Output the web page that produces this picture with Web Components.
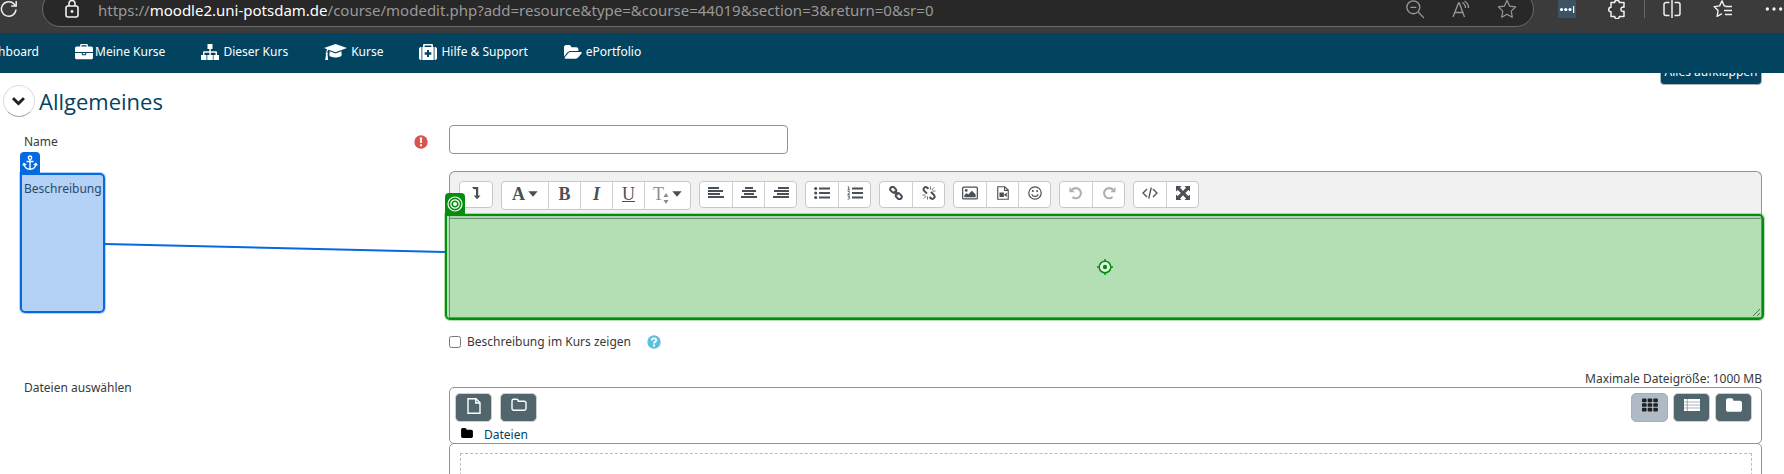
<!DOCTYPE html>
<html lang="de">
<head>
<meta charset="utf-8">
<title>Datei hinzufügen</title>
<style>
  html, body { margin: 0; height: 100%; }
  body { font: 13px/20px "Noto Sans", "Open Sans", sans-serif; color: #373a3c; background: #fff; overflow: hidden; }
</style>
</head>
<body>
<moodle-page></moodle-page>
<script>
const ICONS = {
  reload: ['0 0 18 18', '<g fill="none" stroke="currentColor" stroke-width="1.5"><path d="M16 9.500A7.300 7.300 0 1 1 14 3.900L16 6"/><path d="M16.200 1v5h-5"/></g>'],
  lock: ['0 0 16 20', '<g fill="none" stroke="currentColor" stroke-width="1.6"><rect x="2" y="7" width="12" height="11" rx="2"/><path d="M5 7V4.500a3 3 0 0 1 6 0V7"/></g><circle cx="8" cy="12.500" r="1.400" fill="currentColor"/>'],
  zoomout: ['0 0 18 18', '<g fill="none" stroke="currentColor" stroke-width="1.200"><circle cx="7.500" cy="7.500" r="5.800"/><path d="M12 12l5 5M4.800 7.500h5.400"/></g>'],
  read: ['0 0 20 18', '<g fill="none" stroke="currentColor" stroke-width="1.300"><path d="M2 17L7.500 3h.8L13.500 17M4 12.500h7.800M11 2.500a6 6 0 0 1 3.500 5.500M13.500 1a8 8 0 0 1 4 7"/></g>'],
  star: ['0 0 20 20', '<path fill="none" stroke="currentColor" stroke-width="1.200" stroke-linejoin="round" d="M10 1.500l2.600 5.600 6 .8-4.400 4.200 1.100 6.100L10 15.200l-5.300 3 1.100-6.100L1.400 7.900l6-.8z"/>'],
  dots3: ['0 0 18 18', '<rect width="18" height="18" rx="1" fill="#3b5365"/><g fill="#fff"><circle cx="3.500" cy="9.500" r="1.600"/><circle cx="7.800" cy="9.500" r="1.600"/><circle cx="12" cy="9.500" r="1.600"/><path d="M15 6h1.200v7H15z"/></g>'],
  puzzle: ['0 0 20 20', '<path fill="none" stroke="currentColor" stroke-width="1.500" stroke-linejoin="round" d="M4 3.500h3.700a2.300 2.300 0 0 1 4.600 0H17v4.700a2.200 2.200 0 1 0 0 4V17.500h-4.700a2.300 2.300 0 0 1-4.600 0H4v-4.700a2.300 2.300 0 0 1 0-4.600z"/>'],
  split: ['0 0 20 20', '<path fill="none" stroke="currentColor" stroke-width="1.500" d="M7.500 3.500H4a2 2 0 0 0-2 2v9a2 2 0 0 0 2 2h3.500M12.500 3.500H16a2 2 0 0 1 2 2v9a2 2 0 0 1-2 2h-3.500M10 1v18"/>'],
  favs: ['0 0 20 20', '<path fill="none" stroke="currentColor" stroke-width="1.400" stroke-linejoin="round" d="M13 7.200l-1.800-.3L9 1.800 6.600 6.900l-5.500.7 4 3.900-1 5.900L9 14.700M12.500 7.500H19M11 11.500h8M12 15.500h7"/>'],
  more: ['0 0 18 18', '<g fill="currentColor"><circle cx="3" cy="9" r="1.500"/><circle cx="9" cy="9" r="1.500"/><circle cx="15" cy="9" r="1.500"/></g>'],
  briefcase: ['0 0 1792 1600', '<path d="M640 256h512v-128h-512v128zm1152 640v480q0 66-47 113t-113 47h-1472q-66 0-113-47t-47-113v-480h672v160q0 26 19 45t45 19h320q26 0 45-19t19-45v-160h672zm-768 0v128h-256v-128h256zm768-480v384h-1792v-384q0-66 47-113t113-47h352v-160q0-40 28-68t68-28h576q40 0 68 28t28 68v160h352q66 0 113 47t47 113z"/>'],
  sitemap: ['0 0 18 16', '<path d="M6.500 0h5v5H9.800v2.200H15a1 1 0 0 1 1 1V11h2v5h-5.500v-5h2V8.700H9.800V11h2v5H6.300v-5h2V8.700H3.500V11h2v5H0v-5h2V8.200a1 1 0 0 1 1-1h5.300V5H6.500z"/>'],
  cap: ['0 0 23 18', '<path d="M11.500 1L23 5l-11.500 4.200L4.500 6.700C3.600 7.500 3.300 8.500 3.300 9.800c.6.400.7 1.200.2 1.700L4.200 17H1.200l.8-5.500c-.5-.5-.4-1.300.2-1.700 0-1.400.3-2.600 1-3.600L0 5z"/><path d="M5.700 8.300l5.800 2.200 5.900-2.200.3 3.700c0 1.400-2.800 2.500-6.200 2.500S5.300 13.400 5.300 12z"/>'],
  medkit: ['0 0 18 16', '<path fill-rule="evenodd" d="M4 3V1.200C4 .5 4.500 0 5.200 0h7.600c.7 0 1.200.5 1.200 1.200V3h.7v13H3.300V3zM5.600 1.500V3h6.800V1.500zM8 6v2.300H5.700v2.400H8V13h2v-2.300h2.300V8.300H10V6zM2.500 3v13H2c-1.100 0-2-.9-2-2V5c0-1.100.9-2 2-2zM15.500 3h.5c1.100 0 2 .9 2 2v9c0 1.100-.9 2-2 2h-.5z"/>'],
  folderopen: ['0 0 19 15', '<path d="M18.800 8.200c0 .3-.2.600-.4.900l-3.300 4C14.500 13.800 13.300 14.500 12.300 14.500H1.800c-.5 0-1.100-.2-1.100-.7 0-.3.200-.6.400-.9l3.300-4c.6-.7 1.800-1.300 2.800-1.300h10.500c.5 0 1.100.1 1.100.6zM15.200 4.700v1.700H7.200c-1.300 0-2.900.7-3.800 1.800L0 12.200V2.500C0 1.200 1 .2 2.200.2H5.500C6.700.2 7.700 1.200 7.700 2.500H13c1.200 0 2.200 1 2.200 2.200z"/>'],
  chevron: ['70 112 1792 1792', '<path d="M1683 808l-742 741q-19 19-45 19t-45-19l-742-741q-19-19-19-45.500t19-45.500l166-165q19-19 45-19t45 19l531 531 531-531q19-19 45-19t45 19l166 165q19 19 19 45.500t-19 45.500z"/>'],
  required: ['0 0 14 14', '<circle cx="7" cy="7" r="6.700"/><path fill="#fff" d="M5.800 2.600h2.400l-.3 5.500H6.100zM6 9.200h2v2.100H6z"/>'],
  help: ['0 0 14 14', '<circle cx="7" cy="7" r="6.700"/><path fill="none" stroke="#fff" stroke-width="1.900" d="M4.700 5.400c.1-1.300 1-2 2.300-2s2.300.7 2.300 1.800C9.300 6.700 7 6.600 7 8.500"/><path fill="#fff" d="M6 9.500h2v1.900H6z"/>'],
  level: ['0 0 14 14', '<path d="M3 1h6.200v8.400H11.500L8.100 13.200 4.700 9.400H7V3.200H4.700z"/>'],
  caret: ['0 0 10 6', '<path d="M.3.300h9.400L5 5.800z"/>'],
  left: ['0 0 16 14', '<path d="M0 1h11v2H0zM0 4h15v2H0zM0 7h12v2H0zM0 10h16v2H0z"/>'],
  center: ['0 0 16 14', '<path d="M4 1h8v2H4zM1 4h14v2H1zM3 7h10v2H3zM0 10h16v2H0z"/>'],
  right: ['0 0 16 14', '<path d="M5 1h11v2H5zM1 4h15v2H1zM4 7h12v2H4zM0 10h16v2H0z"/>'],
  ul: ['0 0 16 14', '<path d="M5 1.500h11v2H5zM5 6h11v2H5zM5 10.500h11v2H5z"/><circle cx="1.700" cy="2.500" r="1.600"/><circle cx="1.700" cy="7" r="1.600"/><circle cx="1.700" cy="11.500" r="1.600"/>'],
  ol: ['0 0 16 14', '<path d="M5 1.500h11v2H5zM5 6h11v2H5zM5 10.500h11v2H5z"/><path fill="none" stroke="currentColor" stroke-width=".9" d="M.7.800h1V3.700M.5 3.800h2.500M.7 5.500c2.500-.7 2.500.8 0 2.900h2.300M.6 10h2L1.500 11.300c2 0 1.800 2-.9 1.900"/>'],
  link: ['0 0 14 14', '<g fill="none" stroke="currentColor" stroke-width="2"><rect x="1" y="1.500" width="6.500" height="4.600" rx="2.300" transform="rotate(45 4.200 3.800)"/><rect x="6.500" y="7.900" width="6.500" height="4.600" rx="2.300" transform="rotate(45 9.800 10.200)"/><path d="M5 5l4 4"/></g>'],
  unlink: ['0 0 14 14', '<g fill="none" stroke="currentColor" stroke-width="2"><path d="M6.500 2.800L4.800 1.400C3 .4.600 2.500 2 4.600l3 3M7.500 11l1.800 1.700c2 1 4.200-1.300 3-3.300L9 6"/></g><path fill="none" stroke="currentColor" stroke-width=".8" d="M8.500 3.500V.5M9.800 4l2.400-2.600M10.500 5h3M5.500 10.500v3M4.300 10L1.800 12.500M3.500 9H.5"/>'],
  image: ['0 0 17 14', '<rect x=".7" y=".7" width="15.600" height="12.600" rx="1" fill="none" stroke="currentColor" stroke-width="1.300"/><circle cx="4.500" cy="4.300" r="1.500"/><path d="M2.500 11.500V9.500l2.500-2.500L6.500 8.500l4-4L14.500 8.500v3z"/>'],
  video: ['0 0 14 16', '<path fill="none" stroke="currentColor" stroke-width="1.300" d="M1 .8h8L13 4.700v10.500H1zM8.800.8V5H13"/><path d="M3 7.500h5v5H3zM8.500 9.800L11.300 7.500v5L8.500 10.500z"/>'],
  smile: ['0 0 14 14', '<g fill="none" stroke="currentColor" stroke-width="1.200"><circle cx="7" cy="7" r="6.200"/><path d="M3.700 8.200c1 3 5.600 3 6.600 0"/></g><circle cx="4.900" cy="5" r="1"/><circle cx="9.100" cy="5" r="1"/>'],
  undo: ['0 0 14 14', '<path fill="none" stroke="currentColor" stroke-width="2.100" d="M3 3.800A5.100 5.100 0 1 1 3.400 11"/><path d="M.5 1v5.300h5.300z"/>'],
  redo: ['0 0 14 14', '<path fill="none" stroke="currentColor" stroke-width="2.100" d="M11 3.800A5.100 5.100 0 1 0 10.600 11"/><path d="M13.500 1v5.300H8.200z"/>'],
  code: ['0 0 16 12', '<path fill="none" stroke="currentColor" stroke-width="1.300" d="M5 2L1 6l4 4M11 2l4 4-4 4M9.300.5L6.700 11.500"/>'],
  expand: ['0 0 14 14', '<path d="M0 0h5.500L4 1.700 7 4.900 10 1.700 8.500 0H14v5.500L12.400 4 9.200 7l3.200 3L14 8.500V14H8.500L10 12.400 7 9.200 4 12.400 5.500 14H0V8.500L1.700 10 4.900 7 1.700 4 0 5.500z"/>'],
  file: ['0 0 14 16', '<path fill="none" stroke="currentColor" stroke-width="1.400" d="M1 .8h8L13 4.700v10.500H1zM8.800.8V5H13"/>'],
  foldero: ['0 0 16 14', '<path fill="none" stroke="currentColor" stroke-width="1.400" d="M1 3a1.700 1.700 0 0 1 1.700-1.700h2.800A1.700 1.700 0 0 1 7.200 3v.3h6A1.700 1.700 0 0 1 15 5v5.500a1.700 1.700 0 0 1-1.700 1.700H2.700A1.700 1.700 0 0 1 1 10.500z"/>'],
  folder: ['64 128 1664 1408', '<path d="M1728 608v704q0 92-66 158t-158 66h-1216q-92 0-158-66t-66-158v-960q0-92 66-158t158-66h320q92 0 158 66t66 158v32h672q92 0 158 66t66 158z"/>'],
  grid: ['0 0 15 12', '<rect width="4.300" height="3.400" rx=".8"/><rect x="5.300" width="4.300" height="3.400" rx=".8"/><rect x="10.600" width="4.300" height="3.400" rx=".8"/><rect y="4.300" width="4.300" height="3.400" rx=".8"/><rect x="5.300" y="4.300" width="4.300" height="3.400" rx=".8"/><rect x="10.600" y="4.300" width="4.300" height="3.400" rx=".8"/><rect y="8.600" width="4.300" height="3.400" rx=".8"/><rect x="5.300" y="8.600" width="4.300" height="3.400" rx=".8"/><rect x="10.600" y="8.600" width="4.300" height="3.400" rx=".8"/>'],
  list: ['0 0 16 12', '<path d="M0 0h16v12H0z"/><path fill="none" stroke="#51666c" stroke-width=".5" d="M0 3h16M0 6h16M0 9h16M3.300 0v12"/>'],
  anchor: ['0 0 16 16', '<g fill="none" stroke="currentColor" stroke-width="1.400"><circle cx="8" cy="2.700" r="1.700"/><path d="M8 4.500V14M4.500 6.500h7M2 8.500c.3 3.700 3 5.700 6 5.700s5.700-2 6-5.700M.8 10.500L2 8.500l2.200 1.500M15.200 10.500L14 8.500 11.800 10"/></g>'],
  bullseye: ['0 0 16 16', '<g fill="none" stroke="currentColor" stroke-width="1.200"><circle cx="8" cy="8" r="7"/><circle cx="8" cy="8" r="4.200"/></g><circle cx="8" cy="8" r="2"/>'],
  target: ['0 0 16 16', '<circle cx="8" cy="8" r="5.800" fill="#e2f3e2" stroke="currentColor" stroke-width="1.500"/><circle cx="8" cy="8" r="2.200"/><path d="M7.300 0h1.500v3H7.300zM7.300 13h1.500v3H7.300zM0 7.300h3v1.500H0zM13 7.300h3v1.500h-3z"/>'],
  textsize: ['0 0 8 18', '<path d="M1.500 9L4 5l2.500 4zM1.500 12L4 16l2.500-4z"/>']
};

function define(name, html, setup) {
  const template = document.createElement('template');
  template.innerHTML = html;
  customElements.define(name, class extends HTMLElement {
    connectedCallback() {
      if (this.shadowRoot) return;
      const root = this.attachShadow({ mode: 'open' });
      root.append(template.content.cloneNode(true));
      if (setup) setup(this, root);
    }
  });
}

define('ui-icon', `<style>
  :host { display: inline-flex; flex: none; width: 16px; height: 16px; }
  svg { width: 100%; height: 100%; fill: currentColor; }
</style>`, (host, root) => {
  const [box, body] = ICONS[host.getAttribute('name')];
  root.innerHTML += `<svg viewBox="${box}" aria-hidden="true">${body}</svg>`;
});

define('browser-bar', `<style>
  :host { display: flex; align-items: flex-end; height: 33px; overflow: hidden; background: #3b3b3b; color: #f0f0f0; }
  .bar { display: flex; align-items: center; flex: 1; min-width: 0; height: 48px; }
  ui-icon { width: 20px; height: 20px; }
  .reload { width: 18px; height: 18px; margin-right: 24px; }
  .address { box-sizing: border-box; display: flex; align-items: center; flex: 1; min-width: 0; height: 36px; padding: 0 16px 0 21px; border: 1px solid #6b6b6b; border-radius: 18px; background: #282828; }
  .lock { width: 16px; margin-right: 18px; }
  .url { flex: 1; min-width: 0; padding-top: 2px; font-size: 15px; line-height: 18px; white-space: nowrap; color: #999; }
  b { font-weight: 400; color: #fff; }
  .side { display: flex; gap: 26px; color: #999; }
  .tools { display: flex; align-items: center; gap: 31px; width: 250px; padding-left: 24px; box-sizing: border-box; }
  .tools .ext { width: 18px; height: 18px; }
  .rule { height: 18px; border-left: 1px solid #686868; margin: 0 -14px; }
</style>
<div class="bar">
  <ui-icon class="reload" name="reload"></ui-icon>
  <div class="address"><ui-icon class="lock" name="lock"></ui-icon><div class="url">https://<b>moodle2.uni-potsdam.de</b>/course/modedit.php?add=resource&amp;type=&amp;course=44019&amp;section=3&amp;return=0&amp;sr=0</div>
    <div class="side"><ui-icon name="zoomout"></ui-icon><ui-icon name="read"></ui-icon><ui-icon name="star"></ui-icon></div></div>
  <div class="tools"><ui-icon class="ext" name="dots3"></ui-icon><ui-icon name="puzzle"></ui-icon><span class="rule"></span><ui-icon name="split"></ui-icon><ui-icon name="favs"></ui-icon><ui-icon name="more"></ui-icon></div>
</div>`);

define('site-nav', `<style>
  :host { position: relative; z-index: 2; box-sizing: border-box; display: flex; align-items: center; gap: 36px; height: 40px; padding-bottom: 2px; overflow: hidden; background: #02435f; }
  a { display: flex; align-items: center; gap: 4px; color: #fff; text-decoration: none; white-space: nowrap; font-size: 12px; }
  .cut { width: 39px; justify-content: flex-end; }
  .tight { gap: 2px; }
  ui-icon { width: 18px; height: 16px; }
  .cap { width: 23px; height: 18px; }
</style>
<a class="cut" href="#">Dashboard</a>
<a class="tight" href="#"><ui-icon name="briefcase"></ui-icon>Meine Kurse</a>
<a href="#"><ui-icon name="sitemap"></ui-icon>Dieser Kurs</a>
<a href="#"><ui-icon class="cap" name="cap"></ui-icon>Kurse</a>
<a href="#"><ui-icon name="medkit"></ui-icon>Hilfe &amp; Support</a>
<a href="#"><ui-icon name="folderopen"></ui-icon>ePortfolio</a>`);

define('form-row', `<style>
  :host { position: relative; display: grid; grid-template-columns: 425px minmax(0, 1fr); }
  .label { display: flex; align-items: flex-start; justify-content: space-between; padding-right: 21px; padding-top: 7px; }
  :host(.desc) .label { padding-top: 8px; }
</style><div class="label"><slot name="label"></slot></div><div><slot></slot></div>`);

define('tool-group', `<style>
  :host { display: flex; box-sizing: border-box; min-height: 27px; border: 1px solid #c6c8ca; border-radius: 4px; background: #fff; }
  ::slotted(button) { box-sizing: border-box; width: 32px; height: 25px; padding: 0 0 3px; border: 0; background: none; display: flex; align-items: center; justify-content: center; gap: 3px; color: #495057; font: bold 18px/22px "Liberation Serif", serif; }
  ::slotted(button:not(:first-child)) { border-left: 1px solid #ced0d2; }
</style><slot></slot>`);

define('editor-toolbar', `<style>
  :host { display: flex; align-items: flex-start; gap: 8px; box-sizing: border-box; height: 47px; padding: 9px; border: 1px solid #8f939e; border-bottom: 0; border-radius: 6px 6px 0 0; background: #f1f1f1; }
  ui-icon { height: 14px; }
  .sq { width: 14px; }
  .caret { width: 10px; height: 6px; }
  .text { min-height: 29px; }
  .text button { height: 27px; }
  .plain { font-weight: 400; }
  .text .wide { width: 46px; }
  .text .size { font-weight: 400; color: #8a8d90; gap: 0; }
  .size .caret { color: #495057; margin-left: 2px; }
  .arrows { width: 8px; height: 18px; margin-left: -2px; margin-top: 6px; }
  .off { color: #adb0b3; }
</style>
<tool-group><button title="Mehr"><ui-icon class="sq" name="level"></ui-icon></button></tool-group>
<tool-group class="text"><button class="wide" title="Absatzstil">A<ui-icon class="caret" name="caret"></ui-icon></button><button title="Fett">B</button><button title="Kursiv"><i>I</i></button><button class="plain" title="Unterstrichen"><u>U</u></button><button class="wide size" title="Schriftgröße">T<ui-icon class="arrows" name="textsize"></ui-icon><ui-icon class="caret" name="caret"></ui-icon></button></tool-group>
<tool-group><button title="Linksbündig"><ui-icon name="left"></ui-icon></button><button title="Zentriert"><ui-icon name="center"></ui-icon></button><button title="Rechtsbündig"><ui-icon name="right"></ui-icon></button></tool-group>
<tool-group><button title="Liste"><ui-icon name="ul"></ui-icon></button><button title="Nummerierte Liste"><ui-icon name="ol"></ui-icon></button></tool-group>
<tool-group><button title="Link"><ui-icon class="sq" name="link"></ui-icon></button><button title="Link entfernen"><ui-icon class="sq" name="unlink"></ui-icon></button></tool-group>
<tool-group><button title="Bild"><ui-icon name="image"></ui-icon></button><button title="Video"><ui-icon class="sq" name="video"></ui-icon></button><button title="Emoji"><ui-icon class="sq" name="smile"></ui-icon></button></tool-group>
<tool-group><button title="Rückgängig"><ui-icon class="sq off" name="undo"></ui-icon></button><button title="Wiederholen"><ui-icon class="sq off" name="redo"></ui-icon></button></tool-group>
<tool-group><button title="HTML"><ui-icon name="code"></ui-icon></button><button title="Vollbild"><ui-icon class="sq" name="expand"></ui-icon></button></tool-group>`);

/* Highlight frame laid over the element it marks, with an icon tab on top. */
define('pick-frame', `<style>
  :host { position: absolute; box-sizing: border-box; display: flex; align-items: center; justify-content: center; border: 2px solid var(--line); border-radius: 5px; border-top-left-radius: 0; background: var(--fill); color: var(--line); box-shadow: 0 0 0 1px var(--fill); pointer-events: none; }
  .tab { position: absolute; left: -2px; bottom: calc(100% + 2px); display: flex; align-items: center; justify-content: center; width: 20px; height: 21px; border-radius: 4px 4px 0 0; background: var(--line); color: #fff; }
  .tab ui-icon { width: 16px; height: 16px; }
</style><span class="tab"></span><slot></slot>`, (host, root) => {
  root.querySelector('.tab').innerHTML = `<ui-icon name="${host.getAttribute('icon')}"></ui-icon>`;
});

define('file-manager', `<style>
  :host { display: block; }
  .limit { text-align: right; line-height: 16px; }
  .head { box-sizing: border-box; height: 57px; padding: 5px 9px 0 5px; border: 1px solid #8f939e; border-radius: 5px; }
  .bar { display: flex; gap: 8px; }
  .bar .views { display: flex; gap: 5px; margin-left: auto; }
  button { box-sizing: border-box; display: flex; justify-content: center; align-items: flex-start; width: 37px; height: 29px; padding: 4px 0 0; border: 1px solid #c8ced2; border-radius: 5px; background: #51666c; color: #fff; }
  .on { background: #afbac4; border-color: #a3afb9; color: #1d2125; }
  ui-icon { width: 16px; height: 14px; }
  .doc { height: 16px; }
  .path { display: flex; align-items: center; gap: 11px; margin-top: 3px; padding-left: 6px; line-height: 20px; color: #000; }
  .path ui-icon { width: 12px; height: 10px; margin-bottom: 4px; }
  a { color: #02435f; text-decoration: none; }
  .body { margin-top: -1px; padding: 9px 9px 10px 10px; border: 1px solid #8f939e; border-radius: 5px; }
  .drop { height: 120px; border: 1px dashed #bbb; }
</style>
<div class="limit">Maximale Dateigröße: 1000 MB</div>
<div class="head"><div class="bar"><button title="Datei hinzufügen"><ui-icon class="doc" name="file"></ui-icon></button><button title="Verzeichnis erstellen"><ui-icon name="foldero"></ui-icon></button>
<div class="views"><button class="on" title="Symbole"><ui-icon name="grid"></ui-icon></button><button title="Liste"><ui-icon name="list"></ui-icon></button><button title="Baum"><ui-icon name="folder"></ui-icon></button></div></div>
<div class="path"><ui-icon name="folder"></ui-icon><a href="#">Dateien</a></div></div>
<div class="body"><div class="drop"></div></div>`);

define('course-form', `<style>
  :host { display: block; }
  .actions { display: flex; justify-content: flex-end; margin: -15px 22px 0; height: 27px; }
  .all { width: 102px; height: 27px; padding: 0; border: 1px solid #a9b4ba; border-radius: 4px; background: #02435f; color: #fff; font: inherit; font-size: 12px; line-height: 24px; white-space: nowrap; }
  .head { display: flex; align-items: center; gap: 4px; height: 32px; padding-left: 3px; }
  .toggle { display: flex; align-items: center; justify-content: center; width: 32px; height: 32px; padding: 0; border: 1px solid #ddd; border-bottom-color: #aaa; border-radius: 50%; background: #fff; color: #1d2125; }
  .toggle ui-icon { width: 14px; height: 14px; }
  h3 { margin: 0; font: 22px/32px "Open Sans", "Noto Sans", sans-serif; color: #02435f; }
  .fields { display: grid; gap: 17px; padding: 8px 22px 0 24px; }
  label, .caption { font-size: 12px; line-height: 20px; }
  input[type=text] { box-sizing: border-box; display: block; width: 339px; height: 29px; border: 1px solid #8f939e; border-radius: 4px; }
  .required { width: 14px; height: 14px; margin-top: 3px; color: #d9534f; }
  textarea { display: block; box-sizing: border-box; width: 100%; height: 100px; margin: 0; border: 1px solid #8f939e; }
  .source { left: -4px; top: 2px; width: 85px; height: 140px; --line: #0569e0; --fill: rgba(5,105,222,.3); }
  .dest { left: 421px; right: -2px; top: 43px; height: 106px; --line: #058d0f; --fill: rgba(5,148,8,.3); }
  .dest ui-icon { width: 16px; height: 16px; }
  .wire { position: absolute; left: 81px; top: 72px; width: 340px; height: 10px; }
  .check { display: flex; align-items: center; gap: 6px; height: 14px; }
  .check input { width: 12px; height: 12px; margin: 0; }
  .check ui-icon { width: 14px; height: 14px; margin-left: 10px; color: #5bc0de; }
  .files { margin-top: 5px; font-size: 12px; }
</style>
<div class="actions"><button class="all" type="button">Alles aufklappen</button></div>
<div class="head"><button class="toggle" type="button" aria-label="Einklappen"><ui-icon name="chevron"></ui-icon></button><h3>Allgemeines</h3></div>
<div class="fields">
  <form-row><label slot="label" for="name">Name</label><ui-icon slot="label" class="required" name="required"></ui-icon><input id="name" type="text"></form-row>
  <form-row class="desc"><label slot="label" for="intro">Beschreibung</label><editor-toolbar></editor-toolbar><textarea id="intro"></textarea></form-row>
  <form-row><div class="check"><input id="show" type="checkbox"><label for="show">Beschreibung im Kurs zeigen</label><ui-icon name="help"></ui-icon></div></form-row>
  <form-row class="files"><span slot="label" class="caption">Dateien auswählen</span><file-manager></file-manager></form-row>
</div>`, (host, root) => {
  const row = root.querySelector('.desc');
  const overlay = document.createElement('template');
  overlay.innerHTML = `<svg class="wire" viewBox="0 0 340 10" preserveAspectRatio="none"><path d="M0 1l340 8" stroke="#0569e0" stroke-width="2" fill="none"/></svg>
    <pick-frame class="source" icon="anchor"></pick-frame><pick-frame class="dest" icon="bullseye"><ui-icon name="target"></ui-icon></pick-frame>`;
  row.append(overlay.content);
});

define('moodle-page', `<style>:host { display: block; height: 100vh; overflow: hidden; }</style>
<browser-bar></browser-bar><site-nav></site-nav><course-form></course-form>`);
</script>
</body>
</html>
